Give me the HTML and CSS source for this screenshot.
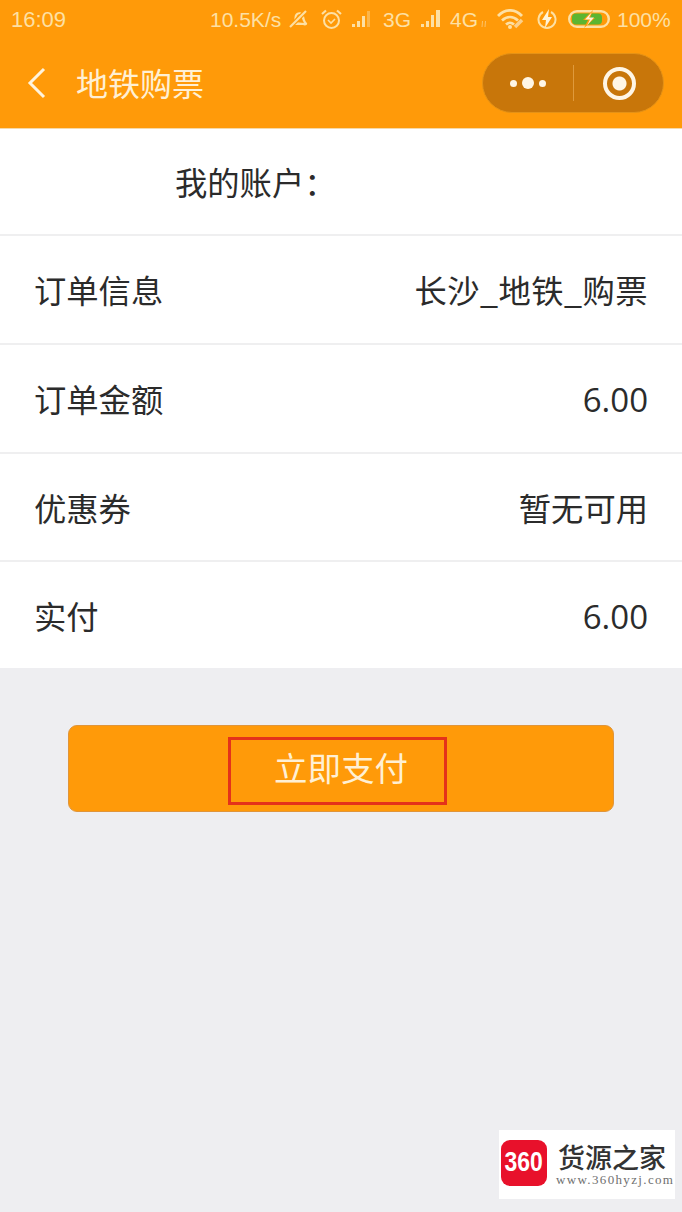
FILE: index.html
```html
<!DOCTYPE html>
<html lang="zh-CN">
<head>
<meta charset="utf-8">
<title>地铁购票</title>
<link rel="stylesheet" href="styles.css">
</head>
<body>
<header class="header">
  <div class="status">
    <span class="time">16:09</span>
    <div class="status-right">
      <span class="speed">10.5K/s</span>
      <svg class="i-bell" viewBox="0 0 21 20"><path d="M5 14c2-2 1-5 2-8 1-3 6-4 8-1 2 3 1 6 4 9 1 2-2 3-4 2H6c-2 0-2-1-1-2z" fill="#fde0a4"/><path d="M7 13c1-2 1-4 2-6 1-2 3-2 4-1 1 2 1 5 3 8z" fill="#ff9a09"/><path d="M1 19 19 1" stroke="#ff9a09" stroke-width="4.500"/><path d="M2 18 18 2" stroke="#fde0a4" stroke-width="2.200"/></svg>
      <svg class="i-alarm" viewBox="0 0 21 20"><circle cx="10.500" cy="11.500" r="7.500" fill="none" stroke="#fde0a4" stroke-width="2"/><path d="M7 11l3 3 4-4" fill="none" stroke="#fde0a4" stroke-width="1.600"/><path d="M1 5l4-3.500M20 5l-4-3.500" fill="none" stroke="#fde0a4" stroke-width="2.200"/></svg>
      <svg class="i-sig1" viewBox="0 0 20 18"><path d="M0 17h3v-3H0zM5 17h3v-6H5zM10 17h3V6h-3z" fill="#fde0a4"/><path d="M15 17h3V1h-3z" fill="#fbb64c"/></svg>
      <span class="net net-3g">3G</span>
      <svg class="i-sig2" viewBox="0 0 20 18"><path d="M0 17h3v-3H0zM5 17h3v-6H5zM10 17h3V5h-3zM15 17h4V0h-4z" fill="#fde0a4"/></svg>
      <span class="net net-4g">4G</span>
      <svg class="i-marks" viewBox="0 0 6 8"><path d="M1.500 1 1 7M4.500 1 4 7" stroke="#fcc268" stroke-width="1"/></svg>
      <svg class="i-wifi" viewBox="0 0 28 20"><path d="M1 7c7-7.500 17-7.500 24 0M5 11.500c5-4.500 11-4.500 16 0M9 15.500c3-2.500 5-2.500 8 0" fill="none" stroke="#fde0a4" stroke-width="2.800"/><circle cx="13" cy="18" r="2" fill="#fde0a4"/><path d="M18 18l7-7" stroke="#fcd08a" stroke-width="3.500"/></svg>
      <svg class="i-flash" viewBox="0 0 20 20"><path d="M6 3a8.500 8.500 0 1 0 8 0" fill="none" stroke="#fde0a4" stroke-width="2"/><path d="M12 0 5 11h4l-1 8 7-11h-4z" fill="#fff3d8"/></svg>
      <svg class="i-batt" viewBox="0 0 42 18"><rect x="1.200" y="1.200" width="39.600" height="15.600" rx="7.800" fill="none" stroke="#fde0a4" stroke-width="2.400"/><rect x="4" y="3.500" width="30" height="11" rx="4" fill="#5cb531"/><path d="M25 0 15 10h5l-4 8 11-10h-5z" fill="#ff9a09"/><path d="M24 2 17 9.500h5l-3 6 7-8h-5z" fill="#fff3d8"/></svg>
      <span class="pct">100%</span>
    </div>
  </div>
  <div class="nav">
    <svg class="back" viewBox="0 0 20 32"><path d="M17 2 3 16l14 14" fill="none" stroke="#fff3dc" stroke-width="3"/></svg>
    <h1 class="title">地铁购票</h1>
    <div class="capsule">
      <div class="cap-more"><i class="dot"></i><i class="dot dot-big"></i><i class="dot"></i></div>
      <div class="cap-line"></div>
      <div class="cap-close"><i class="target"></i></div>
    </div>
  </div>
</header>
<main>
  <section class="list">
    <div class="row row-account"><span>我的账户：</span></div>
    <div class="row row-a"><span class="lift">订单信息</span><span class="lift wide">长沙_地铁_购票</span></div>
    <div class="row row-b"><span class="lift">订单金额</span><span class="num">6.00</span></div>
    <div class="row row-c"><span>优惠券</span><span>暂无可用</span></div>
    <div class="row row-d"><span>实付</span><span class="num">6.00</span></div>
  </section>
  <div class="pay-wrap">
    <button class="pay"><span class="pay-label">立即支付</span></button>
  </div>
</main>
<aside class="mark">
  <div class="mark-logo"><span class="mark-digits">360</span></div>
  <div class="mark-text">
    <div class="mark-name">货源之家</div>
    <div class="mark-url">www.360hyzj.com</div>
  </div>
</aside>
</body>
</html>
```
FILE: styles.css
```css
* { box-sizing: border-box; margin: 0; padding: 0; }
html, body { height: 100%; }
body {
  position: relative;
  width: 682px;
  height: 1212px;
  overflow: hidden;
  background: #eeeef1;
  font-family: "Noto Sans CJK SC", "Noto Sans", sans-serif;
  color: #2b2b2b;
}
.header {
  height: 129px;
  background: #ff9a09;
  border-bottom: 1px solid #f6d9a8;
}
.status {
  display: flex;
  justify-content: space-between;
  align-items: center;
  height: 38px;
  padding: 0 12px 0 11px;
  color: #fde0a4;
  font-family: "Liberation Sans", sans-serif;
  font-size: 21px;
}
.status span { padding-top: 2px; }
.time { font-size: 22px; }
.status-right { display: flex; align-items: center; }
.status svg { display: block; flex: none; }
.speed { width: 78px; }
.i-bell { width: 21px; height: 20px; margin-right: 12px; }
.i-alarm { width: 21px; height: 20px; margin-right: 10px; }
.i-sig1 { width: 20px; height: 18px; margin-right: 11px; }
.net-3g { width: 38px; }
.i-sig2 { width: 20px; height: 18px; margin-right: 9px; }
.net-4g { width: 31px; }
.i-marks { width: 6px; height: 8px; margin: 10px 10px 0 0; }
.i-wifi { width: 28px; height: 20px; margin-right: 12px; }
.i-flash { width: 20px; height: 20px; margin-right: 11px; }
.i-batt { width: 42px; height: 18px; margin-right: 7px; }
.pct { width: 53px; }

.nav {
  display: flex;
  align-items: center;
  height: 90px;
  padding: 0 18px 0 27px;
}
.back { width: 20px; height: 32px; flex: none; }
.title {
  margin-left: 29px;
  padding-bottom: 3px;
  flex: 1;
  font-size: 32px;
  font-weight: 400;
  line-height: 1;
  color: #fff0d4;
}
.capsule {
  display: flex;
  align-items: center;
  width: 182px;
  height: 60px;
  border-radius: 30px;
  background: #c8760a;
  border: 1px solid #e59216;
}
.cap-more {
  display: flex;
  align-items: center;
  justify-content: center;
  gap: 5px;
  width: 90px;
}
.dot { width: 7px; height: 7px; border-radius: 50%; background: #fff6e6; }
.dot-big { width: 12px; height: 12px; }
.cap-line { width: 1px; height: 36px; background: #df9a3c; }
.cap-close { flex: 1; display: flex; justify-content: center; padding-left: 2px; }
.target {
  display: block;
  width: 33px;
  height: 33px;
  border-radius: 50%;
  border: 4px solid #fff6e6;
  background: radial-gradient(circle, #fff6e6 0 6.500px, transparent 7.500px);
}

.list { background: #fff; }
.row {
  display: flex;
  justify-content: space-between;
  align-items: center;
  padding: 0 34px 0 34px;
  font-size: 32.300px;
  line-height: 1;
  border-bottom: 2px solid #efeff0;
}
.row:last-child { border-bottom: 0; }
.row-account { height: 107px; padding-left: 175px; }
.row-a { height: 109px; }
.row-b { height: 109px; }
.row-c { height: 108px; }
.row-d { height: 106px; }
.lift { padding-bottom: 1px; }
.wide { letter-spacing: 0.450px; }
.num { padding-top: 2px; font-family: "Open Sans", "Noto Sans", sans-serif; font-size: 33px; }

.pay-wrap {
  display: flex;
  justify-content: center;
  padding: 57px 68px 0 68px;
}
.pay {
  display: flex;
  align-items: center;
  justify-content: center;
  width: 546px;
  height: 87px;
  background: #ff9a09;
  border: 1px solid #e0953a;
  border-radius: 9px;
  font: inherit;
}
.pay-label {
  display: flex;
  align-items: center;
  justify-content: center;
  width: 219px;
  height: 68px;
  margin: 4px 8px 0 0;
  padding: 0 0 8px 8px;
  border: 3px solid #e4321a;
  font-size: 33.500px;
  line-height: 1;
  color: #fff0d4;
}

.mark {
  position: absolute;
  left: 499px;
  top: 1130px;
  width: 176px;
  height: 69px;
  background: #fff;
  display: flex;
  align-items: center;
  padding-left: 2px;
}
.mark-logo {
  display: flex;
  align-items: center;
  justify-content: center;
  width: 46px;
  height: 46px;
  margin-bottom: 4px;
  border-radius: 9px;
  background: #e8112b;
  color: #fff;
  font-family: "Liberation Sans", sans-serif;
  font-weight: 700;
  font-size: 27px;
  line-height: 1;
  flex: none;
}
.mark-digits { display: block; transform: scaleX(0.85); }
.mark-text { margin-left: 11px; }
.mark-name {
  font-family: "Noto Sans CJK SC", sans-serif;
  font-weight: 500;
  font-size: 27px;
  line-height: 27px;
  color: #333;
  white-space: nowrap;
}
.mark-url {
  font-family: "Liberation Serif", serif;
  font-size: 13px;
  line-height: 14px;
  margin: 3px 0 0 -2px;
  color: #6f6f6f;
  letter-spacing: 1.350px;
  white-space: nowrap;
}
```
